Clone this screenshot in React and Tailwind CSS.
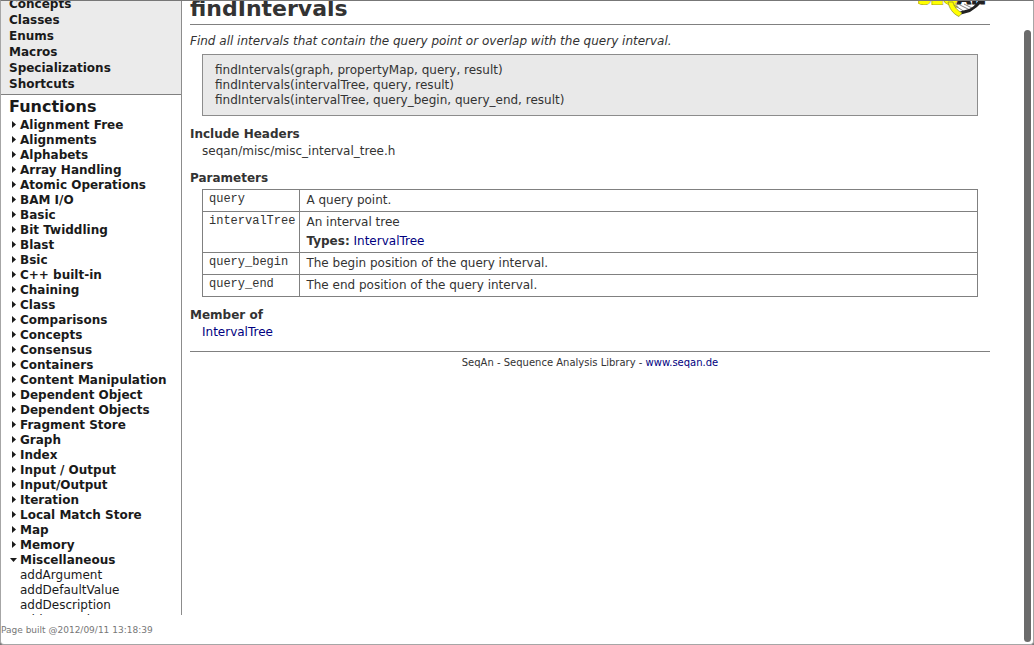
const sections = ["Concepts", "Classes", "Enums", "Macros", "Specializations", "Shortcuts"];

const groups = [
  "Alignment Free", "Alignments", "Alphabets", "Array Handling", "Atomic Operations", "BAM I/O",
  "Basic", "Bit Twiddling", "Blast", "Bsic", "C++ built-in", "Chaining", "Class", "Comparisons",
  "Concepts", "Consensus", "Containers", "Content Manipulation", "Dependent Object",
  "Dependent Objects", "Fragment Store", "Graph", "Index", "Input / Output", "Input/Output",
  "Iteration", "Local Match Store", "Map", "Memory",
];

const members = ["addArgument", "addDefaultValue", "addDescription", "addUsageLine"];

const parameters = [
  { name: "query", text: "A query point." },
  { name: "intervalTree", text: "An interval tree", type: "IntervalTree" },
  { name: "query_begin", text: "The begin position of the query interval." },
  { name: "query_end", text: "The end position of the query interval." },
];

function Arrow({ open }) {
  return (
    <svg className="w-[11px] h-[15px] shrink-0" viewBox="0 0 11 15" fill="#1a1a1a" aria-hidden="true">
      <path d={open ? "M1 5h7L4.5 9z" : "M3 3v7l4-3.5z"} />
    </svg>
  );
}

function Sidebar() {
  return (
    <nav className="w-[181px] shrink-0 flex flex-col overflow-hidden border-r border-[#8c8c8c] text-[#1a1a1a]">
      <ul className="h-[94px] shrink-0 flex flex-col justify-end overflow-hidden bg-[#ebebeb] border-b border-[#808080] pl-2 pb-0.5 font-bold leading-4">
        {sections.map((s) => (
          <li key={s}><a href="#section">{s}</a></li>
        ))}
      </ul>
      <h2 className="pl-2 pt-px text-[16px] leading-[22px] font-bold">Functions</h2>
      <ul className="pl-2 leading-[15px]">
        {groups.map((g) => (
          <li key={g}>
            <a href="#group" className="flex font-bold whitespace-nowrap"><Arrow />{g}</a>
          </li>
        ))}
        <li>
          <a href="#group" className="flex font-bold"><Arrow open />Miscellaneous</a>
          <ul className="pl-[11px]">
            {members.map((m) => (
              <li key={m}><a href="#member">{m}</a></li>
            ))}
          </ul>
        </li>
      </ul>
    </nav>
  );
}

function Logo() {
  return (
    <svg className="w-[72px] h-[17px] shrink-0" viewBox="0 0 72 17" role="img" aria-label="SeqAn">
      <g fontFamily="DejaVu Sans" fontWeight="bold" fontSize="18">
        <text x="0" y="3" fill="#ffff00" stroke="#8a8a30" strokeWidth="2">SEQ</text>
        <text x="0" y="3" fill="#ffff00" stroke="#ffff00" strokeWidth="1">SEQ</text>
        <text x="39" y="3" fill="#222" stroke="#222" strokeWidth="1">AN</text>
      </g>
      <path d="M36 4l11 7M40 3l12 6M46 3l8 4" stroke="#777" strokeWidth="0.9" />
      <path d="M42 10.500L51 8Q57 5 60 0L65 0Q59 7 52 11L43 13.500z" fill="#222" />
      <path d="M30 1C31 7 35 13 41 15.500L44 12C39 9 36 6 35 1z" fill="#ffff00" stroke="#8a8a30" strokeWidth="0.7" />
    </svg>
  );
}

function Heading({ children }) {
  return <h2 className="font-bold leading-[17px]">{children}</h2>;
}

export default function App() {
  return (
    <div className="h-screen bg-[#777]">
      <div className="relative h-full flex flex-col overflow-hidden rounded-b-[4px] bg-white border border-[#a6a6a6] border-t-[#777] font-['DejaVu_Sans',Verdana,sans-serif] text-[12px] text-[#333]">
        <div className="flex-1 min-h-0 flex">
          <Sidebar />
          <main className="flex-1 min-w-0 overflow-hidden pl-2 pr-[43px]">
            <header className="h-6 flex justify-between border-b border-[#808080]">
              <h1 className="text-[22px] leading-[15px] font-bold">findIntervals</h1>
              <Logo />
            </header>
            <p className="pt-2 leading-4 italic">
              Find all intervals that contain the query point or overlap with the query interval.
            </p>
            <div className="mt-[5px] mx-3 px-3 pt-2 pb-[7px] leading-[15px] bg-[#e9e9e9] border border-[#8c8c8c]">
              <p>findIntervals(graph, propertyMap, query, result)</p>
              <p>findIntervals(intervalTree, query, result)</p>
              <p>findIntervals(intervalTree, query_begin, query_end, result)</p>
            </div>
            <section className="pt-[10px]">
              <Heading>Include Headers</Heading>
              <p className="pl-3 leading-[17px]">seqan/misc/misc_interval_tree.h</p>
            </section>
            <section className="pt-[10px]">
              <Heading>Parameters</Heading>
              <div className="mt-[2px] mx-3">
                <table className="w-full border-collapse">
                  <tbody>
                    {parameters.map((p) => (
                      <tr key={p.name}>
                        <th scope="row" className="w-[97px] pl-1.5 pr-1 pt-0.5 align-top text-left border border-[#808080] font-['Liberation_Mono',monospace] text-[12px] font-normal leading-[15px]">
                          {p.name}
                        </th>
                        <td className="px-1.5 pt-0.5 pb-0.5 align-top border border-[#808080] leading-[17px]">
                          {p.text}
                          {p.type && (
                            <p className="pt-0.5">
                              <b>Types:</b> <a href="#type" className="text-[#000080]">{p.type}</a>
                            </p>
                          )}
                        </td>
                      </tr>
                    ))}
                  </tbody>
                </table>
              </div>
            </section>
            <section className="pt-[10px]">
              <Heading>Member of</Heading>
              <p className="pl-3 leading-[17px]"><a href="#type" className="text-[#000080]">IntervalTree</a></p>
            </section>
            <footer className="mt-[10px] pt-1 border-t border-[#808080] text-center text-[10px] leading-[14px]">
              SeqAn - Sequence Analysis Library - <a href="#seqan" className="text-[#000080]">www.seqan.de</a>
            </footer>
          </main>
        </div>
        <p className="h-[29px] shrink-0 pt-2 text-[9px] leading-[14px] text-[#777]">Page built @2012/09/11 13:18:39</p>
        <div className="absolute right-[2px] top-[29px] bottom-[2px] w-[7px] rounded-full bg-[#6b6b6b]" />
      </div>
    </div>
  );
}
